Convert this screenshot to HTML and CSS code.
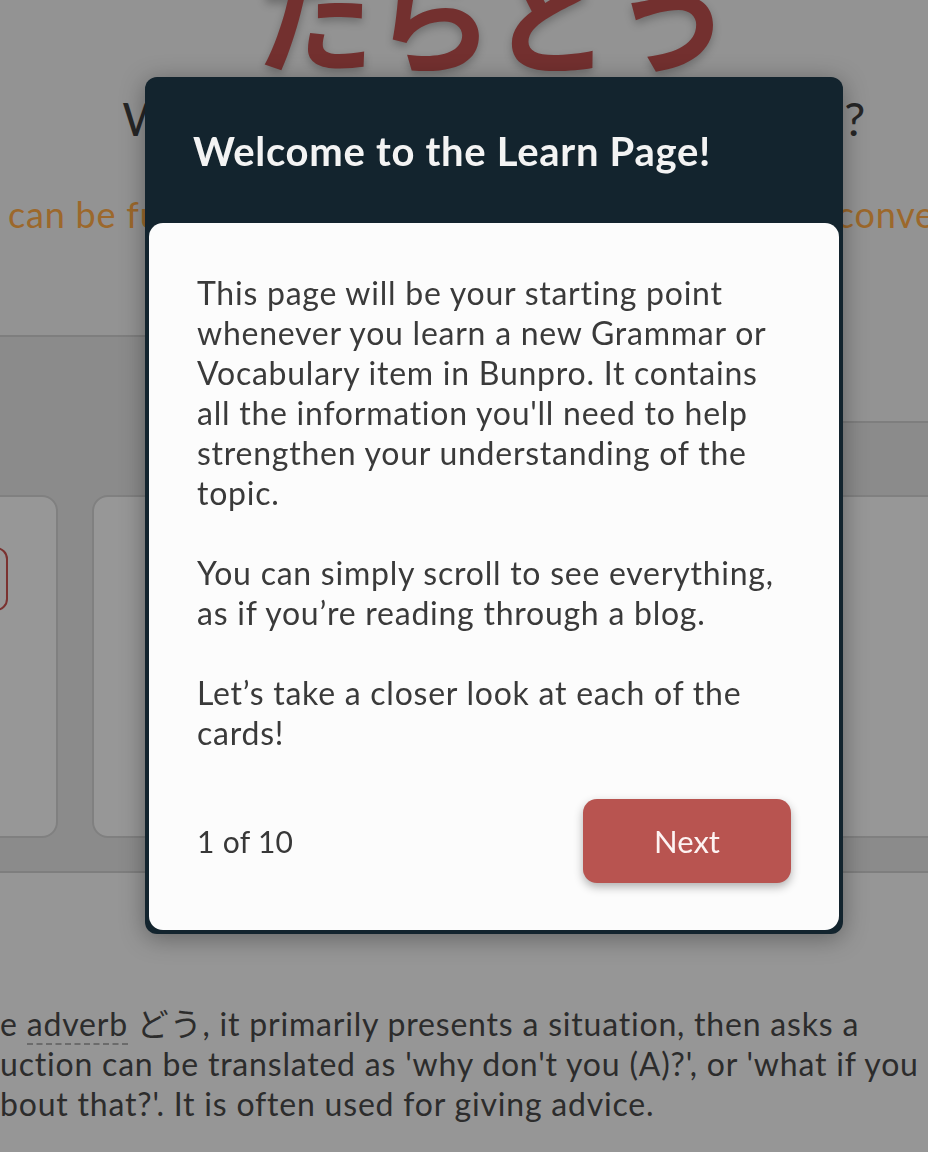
FILE: index.html
```html
<!DOCTYPE html>
<html lang="en">
<head>
    <meta charset="UTF-8">
    <meta name="viewport" content="width=device-width, initial-scale=1.0">
    <title>Learn - たらどう</title>
    <link rel="stylesheet" href="styles.css">
</head>
<body>
    <div class="page">
        <!-- Grammar header -->
        <div class="hero">
            <div class="jp-title">たらどう</div>
            <h1 class="meaning">Why don't you (A)?, How about (A)?</h1>
            <p class="note">can be fully used in both casual and polite spoken conversation</p>
        </div>

        <!-- Tabs + cards -->
        <div class="tabs">
            <div class="tab active"></div>
        </div>
        <div class="deck">
            <div class="card card-wide">
                <div class="pill"></div>
            </div>
            <div class="card"></div>
            <div class="card card-wide"></div>
        </div>

        <p class="about">e <span class="term">adverb</span> どう, it primarily presents a situation, then asks a<br>uction can be translated as 'why don't you (A)?', or 'what if you<br>bout that?'. It is often used for giving advice.</p>
    </div>

    <!-- Onboarding modal -->
    <div class="modal">
        <div class="modal-head">
            <h2>Welcome to the Learn Page!</h2>
        </div>
        <div class="modal-body">
            <p>This page will be your starting point whenever you learn a new Grammar or Vocabulary item in Bunpro. It contains all the information you'll need to help strengthen your understanding of the topic.</p>
            <p>You can simply scroll to see everything, as if you’re reading through a blog.</p>
            <p>Let’s take a closer look at each of the cards!</p>
            <div class="modal-foot">
                <span class="step">1 of 10</span>
                <button type="button" class="next">Next</button>
            </div>
        </div>
    </div>
</body>
</html>
```

FILE: styles.css
```css
body {
    margin: 0;
    padding: 0;
    font-family: Lato, "Noto Sans CJK JP", sans-serif;
    background-color: #939393;
    overflow: hidden;
    height: 1152px;
}

.page {
    width: 988px;
}

/* Header of the grammar point */
.hero {
    height: 335px;
    text-align: center;
    overflow: hidden;
}

.jp-title {
    font-family: "Noto Sans CJK JP", sans-serif;
    font-size: 120px;
    font-weight: 700;
    line-height: 1;
    color: #73302f;
    margin-top: -48px;
    text-shadow: 0 4px 8px rgba(0, 0, 0, 0.25);
}

.meaning {
    margin: 18px 0 0;
    font-size: 47px;
    font-weight: 400;
    line-height: 56px;
    letter-spacing: 0.3px;
    color: #262626;
    white-space: nowrap;
}

.note {
    margin: 46px 0 0;
    padding-left: 8px;
    text-align: left;
    font-size: 36px;
    line-height: 44px;
    letter-spacing: 0.8px;
    color: #9c682b;
    white-space: nowrap;
}

.tabs {
    display: flex;
    height: 86px;
}

.tab.active {
    width: 520px;
    margin-left: -20px;
    background-color: #8b8b8b;
    border-top: 2px solid #7e7e7e;
    margin-bottom: -2px;
    position: relative;
}

.deck {
    display: flex;
    gap: 34px;
    margin-left: -300px;
    padding: 72px 0 33px;
    background-color: #8b8b8b;
    border-top: 2px solid #7e7e7e;
    border-bottom: 2px solid #7e7e7e;
}

.card {
    flex: none;
    width: 360px;
    height: 339px;
    background-color: #979797;
    border: 2px solid #808080;
    border-radius: 16px;
}

.card-wide {
    width: 354px;
}

.card:last-child {
    width: 800px;
}

.pill {
    margin: 50px 0 0 176px;
    width: 126px;
    height: 60px;
    border: 2px solid #7b3230;
    border-radius: 12px;
}

.about {
    margin: 0;
    padding: 131px 0 0 0;
    font-size: 32px;
    line-height: 40px;
    letter-spacing: 0.8px;
    color: #2c2c2c;
    white-space: nowrap;
    background-color: #969696;
    height: 400px;
}

.term {
    border-bottom: 2px dashed #6b6b6b;
}

/* Modal */
.modal {
    position: fixed;
    top: 77px;
    left: 145px;
    width: 698px;
    background-color: #13242e;
    border-radius: 12px;
    box-shadow: 0 4px 24px rgba(0, 0, 0, 0.35);
}

.modal-head {
    padding: 50px 48px 48px;
}

.modal-head h2 {
    margin: 0;
    font-size: 40px;
    line-height: 48px;
    font-weight: 700;
    letter-spacing: 0.7px;
    color: #f3f3f3;
}

.modal-body {
    margin: 0 4px 4px;
    padding: 50px 48px 47px;
    background-color: #fcfcfc;
    border-radius: 14px;
    color: #3a3a3a;
    font-size: 32px;
    line-height: 40px;
    letter-spacing: 0.75px;
}

.modal-body p {
    margin: 0 0 40px;
}

.modal-body p:last-of-type {
    margin-bottom: 0;
}

.modal-foot {
    display: flex;
    justify-content: space-between;
    align-items: center;
    margin-top: 46px;
}

.step {
    color: #383838;
    font-size: 30px;
    letter-spacing: 0.3px;
}

.next {
    width: 208px;
    height: 84px;
    border: none;
    border-radius: 14px;
    background-color: #b85450;
    color: #fdf3f2;
    font-family: Lato, sans-serif;
    font-size: 31px;
    cursor: pointer;
    box-shadow: 0 4px 10px rgba(0, 0, 0, 0.3);
}
```
